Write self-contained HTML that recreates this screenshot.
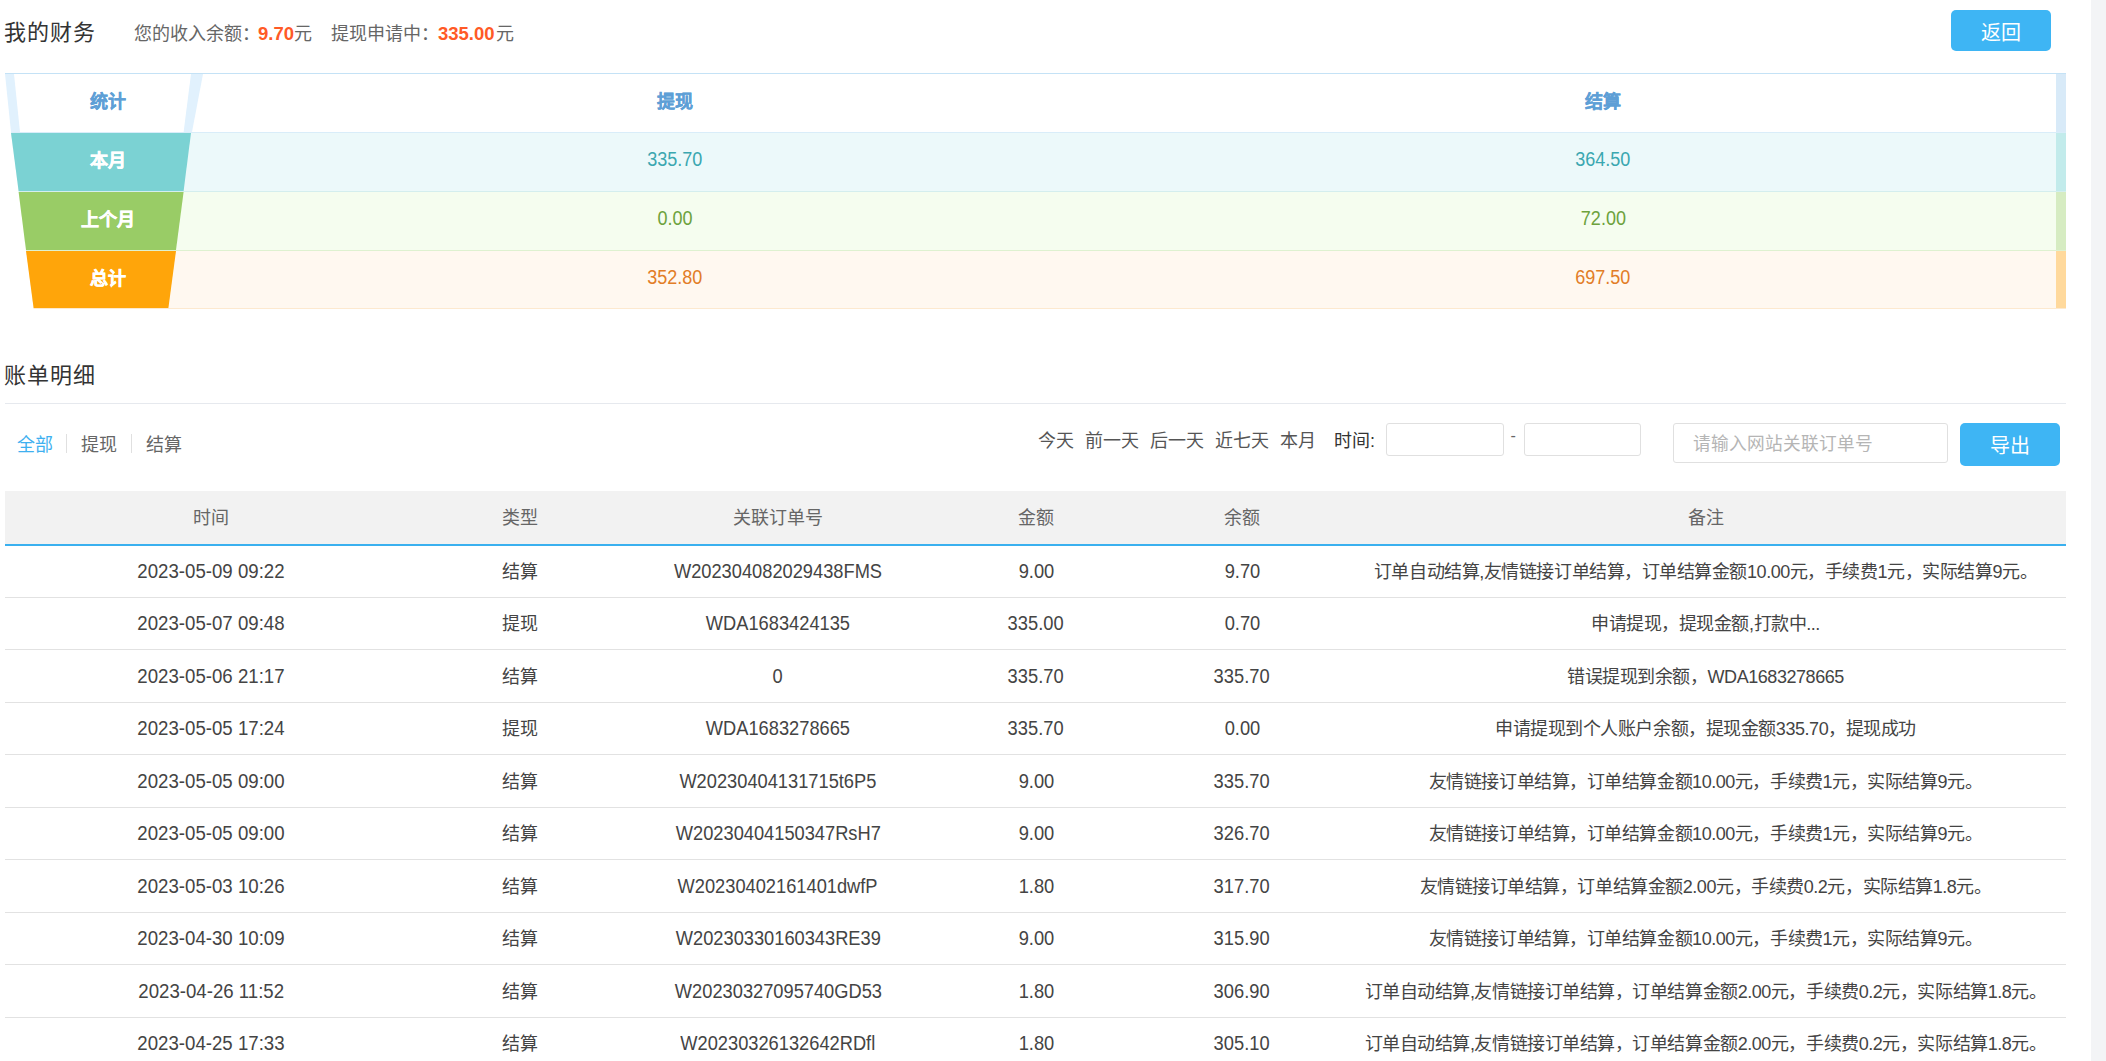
<!DOCTYPE html>
<html lang="zh-CN"><head><meta charset="utf-8">
<style>
*{margin:0;padding:0;box-sizing:border-box;}
html,body{width:2106px;height:1061px;overflow:hidden;background:#fff;}
body{font-family:"Liberation Sans",sans-serif;color:#333;position:relative;}
.abs{position:absolute;white-space:nowrap;}
.strip{position:absolute;left:2091px;top:0;width:15px;height:1061px;background:#f3f4f6;}
.title{letter-spacing:1px;font-size:22px;color:#333;line-height:1;}
.sub{font-size:18px;color:#666;line-height:1;}
.num{font-size:18.5px;color:#ff5a26;font-weight:bold;line-height:1;}
.btn{position:absolute;background:#3eb5f4;color:#fff;border-radius:5px;text-align:center;}
/* stats */
.st{position:absolute;left:5px;top:73px;width:2061px;height:236px;}
.row{position:absolute;left:0;width:2061px;}
.cell{position:absolute;text-align:center;white-space:nowrap;}
.cell span{display:inline-block;transform:scaleX(0.925);}
/* bill table */
.bt{position:absolute;left:5px;top:491px;width:2061px;}
.bh{position:absolute;left:0;top:0;width:2061px;height:55px;background:#f2f2f2;border-bottom:2px solid #3ab0ef;}
.br{position:absolute;left:0;width:2061px;height:53px;border-bottom:1px solid #e2e2e2;}
.c{position:absolute;top:0;height:100%;display:flex;align-items:center;justify-content:center;white-space:nowrap;font-size:18px;color:#444;}
.c span{display:inline-block;}
.br .c1,.br .c3,.br .c4,.br .c5{font-size:20px;color:#444;}
.br .c1 span{transform:scaleX(0.932)}.br .c3 span{transform:scaleX(0.913)}.br .c4 span,.br .c5 span{transform:scaleX(0.915)}.br .c6{letter-spacing:-0.45px}
.c1{left:0;width:412px}.c2{left:412px;width:206px}.c3{left:618px;width:310px}.c4{left:928px;width:206px}.c5{left:1134px;width:206px}.c6{left:1340px;width:721px}
.bh .c{color:#666;padding-bottom:3px;}
.br .c2,.br .c6{padding-bottom:3px;}
.flt{top:426px;font-size:18px;color:#555;}
.inp{position:absolute;border:1px solid #e0e0e0;border-radius:3px;background:#fff;}
</style></head><body>
<div class="strip"></div>

<div class="abs title" style="left:4px;top:22px;">我的财务</div>
<div class="abs sub" style="left:134px;top:25px;">您的收入余额：</div>
<div class="abs num" style="left:258px;top:25px;">9.70</div>
<div class="abs sub" style="left:294px;top:25px;">元</div>
<div class="abs sub" style="left:331px;top:25px;">提现申请中：</div>
<div class="abs num" style="left:438px;top:25px;">335.00</div>
<div class="abs sub" style="left:496px;top:25px;">元</div>
<div class="btn" style="left:1951px;top:10px;width:100px;height:41px;line-height:46px;font-size:20px;">返回</div>

<!-- stats table -->
<div class="st">
  <svg width="2061" height="236" style="position:absolute;left:0;top:0;">
    <rect x="0" y="0" width="2061" height="236" fill="#fff"/>
    <rect x="0" y="59" width="2061" height="59" fill="#ecf9fa"/>
    <rect x="0" y="118" width="2061" height="59" fill="#f5fdef"/>
    <rect x="0" y="177" width="2061" height="59" fill="#fff8f0"/>
    <rect x="0" y="0" width="2061" height="1" fill="#c4e2f6"/>
    <rect x="6" y="59" width="2055" height="1" fill="#d9edf9"/>
    <rect x="0" y="118" width="2061" height="1" fill="#d4eeee"/>
    <rect x="0" y="177" width="2061" height="1" fill="#def1d0"/>
    <rect x="0" y="235" width="2061" height="1" fill="#fde9cf"/>
    <rect x="2051" y="1" width="10" height="58" fill="#d8eaf8"/>
    <rect x="2051" y="60" width="10" height="58" fill="#c2ebeb"/>
    <rect x="2051" y="119" width="10" height="58" fill="#d6ecc2"/>
    <rect x="2051" y="178" width="10" height="57" fill="#ffd99c"/>
    <polygon points="0,59 6,59 28.6,236 0,236" fill="#fff"/>
    <polygon points="0,1 198,1 187,59 6,59" fill="#e1f1fd"/>
    <polygon points="9,1 186,1 178.6,59 15,59" fill="#fff"/>
    <polygon points="6,60 186,60 178.6,118 13.6,118" fill="#7bd2d3"/>
    <polygon points="13.6,119 178.6,119 171,177 21,177" fill="#99cc66"/>
    <polygon points="21,178 171,178 163.4,235 28.6,235" fill="#ffa50a"/>
  </svg>
  <div class="cell" style="left:0;top:0;width:206px;height:59px;line-height:59px;font-size:18px;font-weight:bold;-webkit-text-stroke:0.3px currentColor;color:#5e9fd6;">统计</div>
  <div class="cell" style="left:0;top:59px;width:206px;height:59px;line-height:59px;font-size:18px;font-weight:bold;-webkit-text-stroke:0.5px currentColor;color:#fff;">本月</div>
  <div class="cell" style="left:0;top:118px;width:206px;height:59px;line-height:59px;font-size:18px;font-weight:bold;-webkit-text-stroke:0.5px currentColor;color:#fff;">上个月</div>
  <div class="cell" style="left:0;top:177px;width:206px;height:59px;line-height:59px;font-size:18px;font-weight:bold;-webkit-text-stroke:0.5px currentColor;color:#fff;">总计</div>

  <div class="cell" style="left:570px;top:0;width:200px;height:59px;line-height:59px;font-size:18px;font-weight:bold;-webkit-text-stroke:0.3px currentColor;color:#5e9fd6;">提现</div>
  <div class="cell" style="left:1498px;top:0;width:200px;height:59px;line-height:59px;font-size:18px;font-weight:bold;-webkit-text-stroke:0.3px currentColor;color:#5e9fd6;">结算</div>
  <div class="cell" style="left:570px;top:59px;width:200px;height:59px;line-height:55px;font-size:19.5px;color:#3aa7b0;"><span>335.70</span></div>
  <div class="cell" style="left:1498px;top:59px;width:200px;height:59px;line-height:55px;font-size:19.5px;color:#3aa7b0;"><span>364.50</span></div>
  <div class="cell" style="left:570px;top:118px;width:200px;height:59px;line-height:55px;font-size:19.5px;color:#6da23d;"><span>0.00</span></div>
  <div class="cell" style="left:1498px;top:118px;width:200px;height:59px;line-height:55px;font-size:19.5px;color:#6da23d;"><span>72.00</span></div>
  <div class="cell" style="left:570px;top:177px;width:200px;height:59px;line-height:55px;font-size:19.5px;color:#e27d27;"><span>352.80</span></div>
  <div class="cell" style="left:1498px;top:177px;width:200px;height:59px;line-height:55px;font-size:19.5px;color:#e27d27;"><span>697.50</span></div>
</div>

<div class="abs title" style="left:4px;top:365px;">账单明细</div>
<div class="abs" style="left:5px;top:403px;width:2061px;height:1px;background:#e6e9ee;"></div>

<div class="abs" style="left:17px;top:430px;font-size:18px;color:#3eb0f0;">全部</div>
<div class="abs" style="left:66px;top:434px;width:1px;height:19px;background:#e0e0e0;"></div>
<div class="abs" style="left:81px;top:430px;font-size:18px;color:#666;">提现</div>
<div class="abs" style="left:131px;top:434px;width:1px;height:19px;background:#e0e0e0;"></div>
<div class="abs" style="left:146px;top:430px;font-size:18px;color:#666;">结算</div>

<div class="abs flt" style="left:1038px;">今天</div>
<div class="abs flt" style="left:1085px;">前一天</div>
<div class="abs flt" style="left:1150px;">后一天</div>
<div class="abs flt" style="left:1215px;">近七天</div>
<div class="abs flt" style="left:1280px;">本月</div>
<div class="abs flt" style="left:1334px;color:#333;">时间:</div>
<div class="inp" style="left:1386px;top:423px;width:118px;height:33px;"></div>
<div class="abs" style="left:1510.5px;top:427px;font-size:16px;color:#666;">-</div>
<div class="inp" style="left:1524px;top:423px;width:117px;height:33px;"></div>
<div class="inp" style="left:1673px;top:423px;width:275px;height:40px;"></div>
<div class="abs" style="left:1693px;top:429px;font-size:17.7px;color:#b5b5b5;">请输入网站关联订单号</div>
<div class="btn" style="left:1960px;top:423px;width:100px;height:43px;line-height:46px;font-size:20px;">导出</div>

<div class="bt">
  <div class="bh"><div class="c c1">时间</div><div class="c c2">类型</div><div class="c c3">关联订单号</div><div class="c c4">金额</div><div class="c c5">余额</div><div class="c c6">备注</div></div>
<!--ROWS-->
  <div class="br" style="top:55px;height:52px;"><div class="c c1"><span>2023-05-09 09:22</span></div><div class="c c2"><span>结算</span></div><div class="c c3"><span>W202304082029438FMS</span></div><div class="c c4"><span>9.00</span></div><div class="c c5"><span>9.70</span></div><div class="c c6"><span>订单自动结算,友情链接订单结算，订单结算金额10.00元，手续费1元，实际结算9元。</span></div></div>
  <div class="br" style="top:107px;height:52px;"><div class="c c1"><span>2023-05-07 09:48</span></div><div class="c c2"><span>提现</span></div><div class="c c3"><span>WDA1683424135</span></div><div class="c c4"><span>335.00</span></div><div class="c c5"><span>0.70</span></div><div class="c c6"><span>申请提现，提现金额,打款中...</span></div></div>
  <div class="br" style="top:159px;height:53px;"><div class="c c1"><span>2023-05-06 21:17</span></div><div class="c c2"><span>结算</span></div><div class="c c3"><span>0</span></div><div class="c c4"><span>335.70</span></div><div class="c c5"><span>335.70</span></div><div class="c c6"><span>错误提现到余额，WDA1683278665</span></div></div>
  <div class="br" style="top:212px;height:52px;"><div class="c c1"><span>2023-05-05 17:24</span></div><div class="c c2"><span>提现</span></div><div class="c c3"><span>WDA1683278665</span></div><div class="c c4"><span>335.70</span></div><div class="c c5"><span>0.00</span></div><div class="c c6"><span>申请提现到个人账户余额，提现金额335.70，提现成功</span></div></div>
  <div class="br" style="top:264px;height:53px;"><div class="c c1"><span>2023-05-05 09:00</span></div><div class="c c2"><span>结算</span></div><div class="c c3"><span>W20230404131715t6P5</span></div><div class="c c4"><span>9.00</span></div><div class="c c5"><span>335.70</span></div><div class="c c6"><span>友情链接订单结算，订单结算金额10.00元，手续费1元，实际结算9元。</span></div></div>
  <div class="br" style="top:317px;height:52px;"><div class="c c1"><span>2023-05-05 09:00</span></div><div class="c c2"><span>结算</span></div><div class="c c3"><span>W20230404150347RsH7</span></div><div class="c c4"><span>9.00</span></div><div class="c c5"><span>326.70</span></div><div class="c c6"><span>友情链接订单结算，订单结算金额10.00元，手续费1元，实际结算9元。</span></div></div>
  <div class="br" style="top:369px;height:53px;"><div class="c c1"><span>2023-05-03 10:26</span></div><div class="c c2"><span>结算</span></div><div class="c c3"><span>W20230402161401dwfP</span></div><div class="c c4"><span>1.80</span></div><div class="c c5"><span>317.70</span></div><div class="c c6"><span>友情链接订单结算，订单结算金额2.00元，手续费0.2元，实际结算1.8元。</span></div></div>
  <div class="br" style="top:422px;height:52px;"><div class="c c1"><span>2023-04-30 10:09</span></div><div class="c c2"><span>结算</span></div><div class="c c3"><span>W20230330160343RE39</span></div><div class="c c4"><span>9.00</span></div><div class="c c5"><span>315.90</span></div><div class="c c6"><span>友情链接订单结算，订单结算金额10.00元，手续费1元，实际结算9元。</span></div></div>
  <div class="br" style="top:474px;height:53px;"><div class="c c1"><span>2023-04-26 11:52</span></div><div class="c c2"><span>结算</span></div><div class="c c3"><span>W20230327095740GD53</span></div><div class="c c4"><span>1.80</span></div><div class="c c5"><span>306.90</span></div><div class="c c6"><span>订单自动结算,友情链接订单结算，订单结算金额2.00元，手续费0.2元，实际结算1.8元。</span></div></div>
  <div class="br" style="top:527px;height:52px;"><div class="c c1"><span>2023-04-25 17:33</span></div><div class="c c2"><span>结算</span></div><div class="c c3"><span>W20230326132642RDfl</span></div><div class="c c4"><span>1.80</span></div><div class="c c5"><span>305.10</span></div><div class="c c6"><span>订单自动结算,友情链接订单结算，订单结算金额2.00元，手续费0.2元，实际结算1.8元。</span></div></div>
<!--/ROWS-->
</div>
</body></html>
